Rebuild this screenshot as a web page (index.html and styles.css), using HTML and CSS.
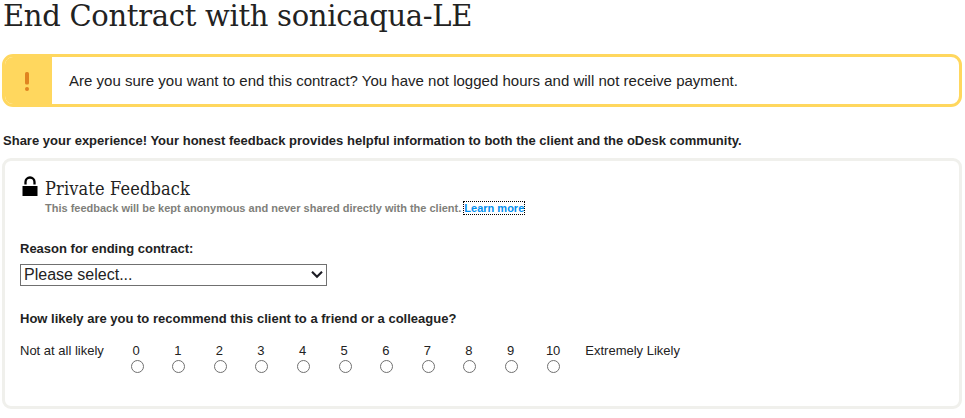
FILE: index.html
```html
<!DOCTYPE html>
<html lang="en">
<head>
<meta charset="utf-8">
<title>End Contract</title>
<link rel="stylesheet" href="styles.css">
</head>
<body>
<main class="page">
  <h1 class="title">End Contract with sonicaqua-LE</h1>
  <section class="alert">
    <div class="alert-icon">
      <svg width="4" height="20" viewBox="0 0 4 20"><rect width="4" height="12.5" rx="1.6"/><circle cx="2" cy="17" r="2"/></svg>
    </div>
    <p class="alert-text">Are you sure you want to end this contract? You have not logged hours and will not receive payment.</p>
  </section>
  <p class="share">Share your experience! Your honest feedback provides helpful information to both the client and the oDesk community.</p>
  <section class="panel">
    <header class="panel-head">
      <svg class="lock" width="16" height="21" viewBox="0 0 16 21"><path d="M3.5 8.5V6a4.5 4.5 0 0 1 9 0V8.5" fill="none" stroke="#000" stroke-width="2.3"/><rect x=".5" y="10" width="15" height="10"/></svg>
      <div>
        <h2 class="heading">Private Feedback</h2>
        <p class="note">This feedback will be kept anonymous and never shared directly with the client. <a class="learn" href="#">Learn more</a></p>
      </div>
    </header>
    <div class="label reason">Reason for ending contract:</div>
    <div class="select" role="combobox" tabindex="0">
      <span>Please select...</span>
      <svg width="12" height="8" viewBox="0 0 12 8"><path d="M1 .7l5 5 5-5" fill="none" stroke="#1c1c24" stroke-width="2.1"/></svg>
    </div>
    <div class="label likely">How likely are you to recommend this client to a friend or a colleague?</div>
    <div class="scale">
      <span class="low">Not at all likely</span>
      <label class="option"><span>0</span><input type="radio" name="score"></label>
      <label class="option"><span>1</span><input type="radio" name="score"></label>
      <label class="option"><span>2</span><input type="radio" name="score"></label>
      <label class="option"><span>3</span><input type="radio" name="score"></label>
      <label class="option"><span>4</span><input type="radio" name="score"></label>
      <label class="option"><span>5</span><input type="radio" name="score"></label>
      <label class="option"><span>6</span><input type="radio" name="score"></label>
      <label class="option"><span>7</span><input type="radio" name="score"></label>
      <label class="option"><span>8</span><input type="radio" name="score"></label>
      <label class="option"><span>9</span><input type="radio" name="score"></label>
      <label class="option ten"><span>10</span><input type="radio" name="score"></label>
      <span class="high">Extremely Likely</span>
    </div>
  </section>
</main>
</body>
</html>
```

FILE: styles.css
```css
* { box-sizing: border-box; }
body { margin: 0; background: #fff; color: #222; font: 13px/16px "Liberation Sans", Arial, sans-serif; }
h1, h2, p { margin: 0; }
.page { padding: 0 3px 0 2px; }
.title { height: 54px; padding-left: 1px; font: 400 29px/33px "DejaVu Serif", serif; letter-spacing: -0.3px; white-space: nowrap; }
.alert { display: flex; height: 53px; border: 3px solid #ffd75e; border-radius: 11px; overflow: hidden; }
.alert-icon { display: flex; width: 47px; justify-content: center; align-items: center; background: #ffd75e; padding: 2px 3px 0 0; fill: #e08420; }
.alert-text { padding: 15px 0 0 17px; font-size: 15px; line-height: 18px; letter-spacing: 0.01px; white-space: nowrap; }
.share { padding: 26px 0 0 1px; height: 51px; font-weight: 700; letter-spacing: 0.01px; white-space: nowrap; }
.panel { height: 251px; border: 3px solid #f0f0ec; border-radius: 9px; padding: 15px; }
.panel-head { display: flex; gap: 7px; height: 65px; padding-left: 2px; }
.heading { height: 26px; font: 400 18px/26px "DejaVu Serif Condensed", "DejaVu Serif", serif; font-stretch: condensed; letter-spacing: 0.15px; white-space: nowrap; }
.note { font-size: 11px; line-height: 13px; font-weight: 700; color: #807f7a; white-space: nowrap; }
.learn { color: #008ff0; text-decoration: none; outline: 1px dotted #000; outline-offset: 0; }
.label { font-weight: 700; white-space: nowrap; }
.reason { height: 23px; }
.select { display: flex; width: 307px; height: 22px; border: 1px solid #707070; align-items: center; justify-content: space-between; padding: 0 3px; font-size: 16px; line-height: 20px; }
.likely { margin-top: 25px; }
.scale { display: flex; margin-top: 16px; white-space: nowrap; }
.low { width: 96.4px; }
.option { display: flex; flex-direction: column; align-items: center; width: 41.6px; }
.option span { margin-right: 2px; }
.option.ten span { margin-right: 0; }
.option input { appearance: none; width: 13px; height: 13px; margin: 1px 0 0; border: 1px solid #707070; border-radius: 50%; background: #fff; }
.high { margin-left: 11.4px; }
```
